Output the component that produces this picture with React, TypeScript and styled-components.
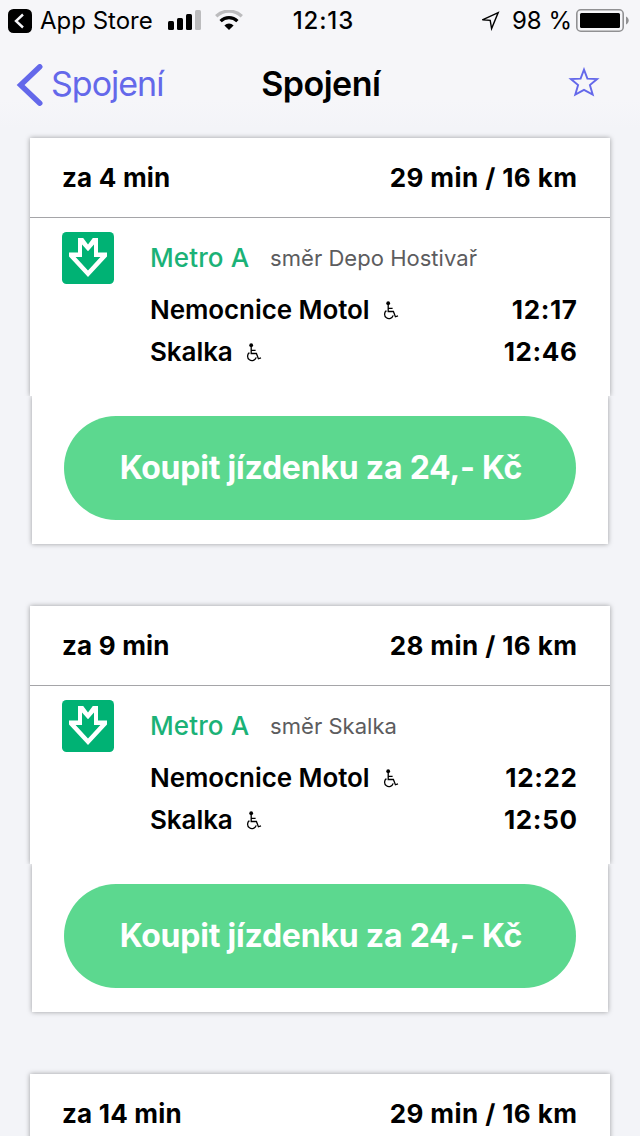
import React from 'react';
import styled, { createGlobalStyle } from 'styled-components';

const GlobalStyle = createGlobalStyle`
  * { box-sizing: border-box; }
  html, body { margin: 0; padding: 0; height: 100%; overflow: hidden; }
  body { background: #f3f4f8; font-family: Inter, "Liberation Sans", sans-serif; color: #000; }
`;

const Screen = styled.div`
  width: 640px;
  height: 1136px;
  overflow: hidden;
  display: flex;
  flex-direction: column;
`;

const TopArea = styled.div`
  flex: none;
  background: linear-gradient(#f6f6f9 100px, #f3f4f8 128px);
`;

const StatusBar = styled.div`
  height: 40px;
  display: grid;
  grid-template-columns: 1fr auto 1fr;
  align-items: center;
  padding: 2px 11px 0 8px;
`;

const StatusGroup = styled.div<{ $end?: boolean }>`
  display: flex;
  align-items: center;
  justify-content: ${p => (p.$end ? 'flex-end' : 'flex-start')};
`;

const Label = styled.span<{ $size: number; $weight?: number; $spacing?: number; $color?: string }>`
  font-size: ${p => p.$size}px;
  font-weight: ${p => p.$weight ?? 400};
  letter-spacing: ${p => p.$spacing ?? 0}px;
  margin-right: ${p => -(p.$spacing ?? 0)}px;
  color: ${p => p.$color ?? '#000'};
  white-space: pre;
  line-height: 1.2;
`;

const Clock = styled(Label)`
  padding-left: 9px;
`;

const NavBar = styled.div`
  height: 88px;
  display: grid;
  grid-template-columns: 1fr auto 1fr;
  align-items: center;
  padding: 1px 14px 0 16px;
`;

const Back = styled.div`
  display: flex;
  align-items: center;
  gap: 8px;
`;

const StarSlot = styled.div`
  display: flex;
  justify-content: flex-end;
  padding: 0 26px 6px 0;
`;

const List = styled.main`
  display: flex;
  flex-direction: column;
  gap: 62px;
  padding-top: 10px;
`;

const Card = styled.section`
  flex: none;
  display: flex;
  flex-direction: column;
`;

const Panel = styled.div`
  margin: 0 30px;
  background: #fff;
  box-shadow: 0 0 5px rgba(0, 0, 0, 0.36);
  clip-path: inset(-8px -8px 0 -8px);
`;

const CardHeader = styled.header`
  height: 80px;
  display: flex;
  align-items: center;
  justify-content: space-between;
  padding: 1px 33px 0 32px;
  border-bottom: 1px solid #a5a5a8;
`;

const Body = styled.div`
  height: 178px;
  display: flex;
  gap: 36px;
  padding: 14px 33px 0 32px;
`;

const Details = styled.div`
  flex: 1;
  display: flex;
  flex-direction: column;
`;

const Line = styled.div`
  height: 52px;
  display: flex;
  align-items: center;
  gap: 21px;
`;

const Stop = styled.div`
  height: 42px;
  display: flex;
  align-items: center;
  justify-content: space-between;
`;

const Stops = styled.div`
  padding-top: 5px;
`;

const StopName = styled.div`
  display: flex;
  align-items: center;
  gap: 13px;
`;

const Footer = styled.div`
  height: 148px;
  margin: 0 32px;
  padding: 20px 32px 24px;
  background: #fff;
  box-shadow: 0 0 5px rgba(0, 0, 0, 0.36);
  clip-path: inset(0 -8px -8px -8px);
`;

const BuyButton = styled.button`
  display: flex;
  align-items: center;
  justify-content: center;
  width: 512px;
  height: 104px;
  padding: 1px 0 0 2px;
  border: 0;
  border-radius: 52px;
  background: #5cd88f;
  font-family: inherit;
`;

const Gap = styled.span<{ $w: number }>`
  flex: none;
  width: ${p => p.$w}px;
`;

const ReturnIcon = () => (
  <svg width="24" height="24" viewBox="0 0 24 24">
    <rect width="24" height="24" rx="5.5" />
    <path d="M15 5.5 8 12l7 6.5" fill="none" stroke="#f6f6f9" strokeWidth="2.4" />
  </svg>
);

const SignalIcon = () => (
  <svg width="33" height="20" viewBox="0 0 33 20">
    <rect x="0" y="11" width="6" height="9" rx="1.5" />
    <rect x="9" y="8" width="6" height="12" rx="1.5" />
    <rect x="18" y="4" width="6" height="16" rx="1.5" />
    <rect x="27" y="0" width="6" height="20" rx="1.5" fill="#bcbcbe" />
  </svg>
);

const SignalSlot = styled.div`
  display: flex;
  padding-bottom: 2px;
`;

const WifiIcon = () => (
  <svg width="28" height="20" viewBox="0 0 28 20">
    <path d="M1.2 6.3a18.5 18.5 0 0 1 25.6 0" fill="none" stroke="#bcbcbe" strokeWidth="3.3" />
    <path d="M5.6 11.1a12.1 12.1 0 0 1 16.8 0" fill="none" stroke="#000" strokeWidth="3.3" />
    <path d="M14 20 9.4 15.4a6.6 6.6 0 0 1 9.2 0z" />
  </svg>
);

const LocationIcon = () => (
  <svg width="20" height="20" viewBox="0 0 20 20">
    <path d="M18.2 1.6 2.4 8.8 10.2 9.4 11.6 17.6z" fill="none" stroke="#000" strokeWidth="1.4" />
  </svg>
);

const BatteryIcon = () => (
  <svg width="53" height="23" viewBox="0 0 53 23">
    <rect x="0.8" y="0.8" width="46.4" height="21.4" rx="4" fill="none" stroke="#919193" strokeWidth="1.6" />
    <rect x="4" y="4" width="40" height="15" rx="1.5" />
    <path d="M50 7.5c3.6 1.6 3.6 6.4 0 8z" fill="#919193" />
  </svg>
);

const ChevronIcon = () => (
  <svg width="27" height="42" viewBox="0 0 27 42">
    <path d="M23.8 2.8 4.6 21 23.8 39.2" fill="none" stroke="#6468ea" strokeWidth="5.4" strokeLinecap="round" />
  </svg>
);

const StarIcon = () => (
  <svg width="32" height="30" viewBox="0 0 32 30">
    <path
      d="M16 2.6 19.4 11.7 29.1 12.1 21.9 18.1 24.7 27.5 16 22.9 7.3 27.5 10.1 18.1 2.9 12.1 12.6 11.7z"
      fill="none"
      stroke="#6468ea"
      strokeWidth="1.9"
    />
  </svg>
);

const MetroIcon = () => (
  <svg width="52" height="52" viewBox="0 0 52 52">
    <rect width="52" height="52" rx="4.5" fill="#00b274" />
    <path
      fill="#fff"
      fillRule="evenodd"
      d="M16 6h5.2L26 12.4 30.8 6H36v14.6h9V24.4L26 45 7 24.4V20.6h9zM20 12.6V25h-6.4L26 38.6 38.4 25H32V12.6l-6 6.6z"
    />
  </svg>
);

const WheelchairIcon = () => (
  <svg width="16" height="19" viewBox="0 0 16 19">
    <circle cx="5.2" cy="2.2" r="1.9" />
    <path
      d="M5.2 3v7.5h5.2l2 5.3 2.6-.9M5.4 7.4h4.2M3.4 9.6a4.4 4.4 0 1 0 6.8 4.8"
      fill="none"
      stroke="#000"
      strokeWidth="1.3"
    />
  </svg>
);

interface StopInfo {
  name: string;
  time: string;
}

interface Connection {
  departure: string;
  summary: string;
  direction?: string;
  stops?: StopInfo[];
}

const connections: Connection[] = [
  {
    departure: 'za 4 min',
    summary: '29 min / 16 km',
    direction: 'směr Depo Hostivař',
    stops: [
      { name: 'Nemocnice Motol', time: '12:17' },
      { name: 'Skalka', time: '12:46' },
    ],
  },
  {
    departure: 'za 9 min',
    summary: '28 min / 16 km',
    direction: 'směr Skalka',
    stops: [
      { name: 'Nemocnice Motol', time: '12:22' },
      { name: 'Skalka', time: '12:50' },
    ],
  },
  {
    departure: 'za 14 min',
    summary: '29 min / 16 km',
  },
];

const ConnectionCard = ({ item }: { item: Connection }) => (
  <Card>
    <Panel>
      <CardHeader>
        <Label $size={26} $weight={650} $spacing={0.2}>{item.departure}</Label>
        <Label $size={26} $weight={650} $spacing={0.42}>{item.summary}</Label>
      </CardHeader>
      {item.stops && (
        <Body>
          <MetroIcon />
          <Details>
            <Line>
              <Label $size={26} $weight={550} $spacing={0.1} $color="#1bb277">Metro A</Label>
              <Label $size={22} $spacing={0.03} $color="#5c5c5e">{item.direction}</Label>
            </Line>
            <Stops>
              {item.stops.map(stop => (
                <Stop key={stop.name}>
                  <StopName>
                    <Label $size={26} $weight={580} $spacing={-0.08}>{stop.name}</Label>
                    <WheelchairIcon />
                  </StopName>
                  <Label $size={26} $weight={650} $spacing={0.65}>{stop.time}</Label>
                </Stop>
              ))}
            </Stops>
          </Details>
        </Body>
      )}
    </Panel>
    {item.stops && (
      <Footer>
        <BuyButton>
          <Label $size={32} $weight={650} $spacing={-0.22} $color="#fff">Koupit jízdenku za 24,- Kč</Label>
        </BuyButton>
      </Footer>
    )}
  </Card>
);

export default function App() {
  return (
    <>
      <GlobalStyle />
      <Screen>
        <TopArea>
          <StatusBar>
            <StatusGroup>
              <ReturnIcon />
              <Gap $w={8} />
              <Label $size={24}>App Store</Label>
              <Gap $w={15} />
              <SignalSlot>
                <SignalIcon />
              </SignalSlot>
              <Gap $w={14} />
              <SignalSlot>
                <WifiIcon />
              </SignalSlot>
            </StatusGroup>
            <Clock $size={24} $weight={550} $spacing={0.85}>12:13</Clock>
            <StatusGroup $end>
              <LocationIcon />
              <Gap $w={12} />
              <Label $size={24}>98 %</Label>
              <Gap $w={4} />
              <BatteryIcon />
            </StatusGroup>
          </StatusBar>
          <NavBar>
            <Back>
              <ChevronIcon />
              <Label $size={34} $spacing={-1} $color="#6468ea">Spojení</Label>
            </Back>
            <Label $size={34} $weight={600} $spacing={-0.5}>Spojení</Label>
            <StarSlot>
              <StarIcon />
            </StarSlot>
          </NavBar>
        </TopArea>
        <List>
          {connections.map(item => (
            <ConnectionCard key={item.departure} item={item} />
          ))}
        </List>
      </Screen>
    </>
  );
}
